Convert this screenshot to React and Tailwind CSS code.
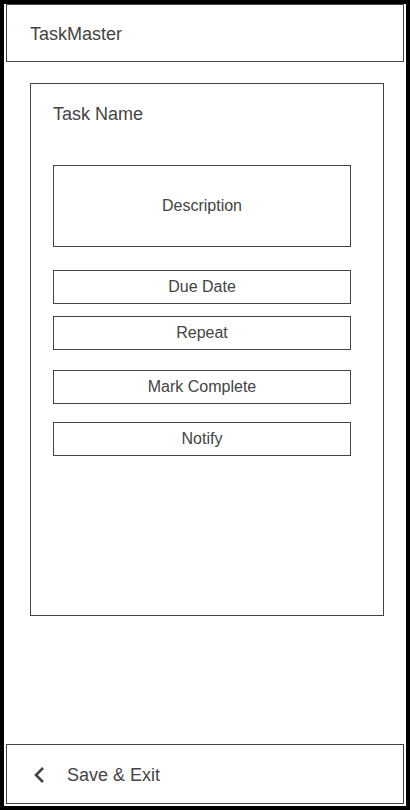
export default function App() {
  const font = "font-['Liberation_Sans',Arial,sans-serif]";
  const box = "w-[298px] h-[34px] border border-[#444] flex items-center justify-center text-[16px]";
  return (
    <div className="w-[410px] h-[810px] bg-black p-[4px]">
      <div className={`h-full bg-white flex flex-col ${font} text-[#444]`}>
        <header className="mx-[2px] h-[58px] shrink-0 border border-[#444] flex items-center pl-[23px] pt-[2px] text-[18px]">
          TaskMaster
        </header>
        <main className="flex-1">
          <section className="ml-[26px] mt-[21px] w-[354px] h-[533px] border border-[#444] pl-[22px] pt-[20px]">
            <h1 className="text-[18px] leading-[21px]">Task Name</h1>
            <div className="mt-[40px] w-[298px] h-[82px] border border-[#444] flex items-center justify-center text-[16px]">
              Description
            </div>
            <div className={`mt-[23px] ${box}`}>Due Date</div>
            <div className={`mt-[12px] ${box}`}>Repeat</div>
            <div className={`mt-[20px] ${box}`}>Mark Complete</div>
            <div className={`mt-[18px] ${box}`}>Notify</div>
          </section>
        </main>
        <footer className="mx-[2px] mb-[2px] h-[60px] shrink-0 border border-[#444] flex items-center pl-[26px] pt-[2px] text-[18px]">
          <svg width="12" height="18" viewBox="0 0 12 18" className="shrink-0">
            <path d="M10 2 L3 9 L10 16" fill="none" stroke="#444" strokeWidth="2.6" />
          </svg>
          <span className="ml-[22px]">Save &amp; Exit</span>
        </footer>
      </div>
    </div>
  );
}
